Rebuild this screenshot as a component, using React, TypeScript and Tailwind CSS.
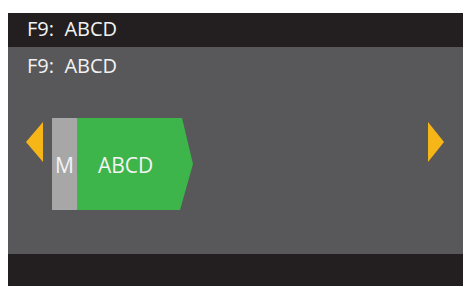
export default function App() {
  return (
    <div className="w-[465px] h-[287px] bg-white pt-[13px] pl-[8px] pr-[2px] pb-[1px] flex" style={{ fontFamily: '"Open Sans", "Noto Sans", sans-serif' }}>
      <div className="flex-1 flex flex-col">
        <div className="h-[34px] bg-[#231f20] flex items-center pl-[19px] pb-[2px]">
          <span className="text-[20px] leading-[24px] text-[#f2f2f2] whitespace-pre">F9:  ABCD</span>
        </div>
        <div className="flex-1 bg-[#58585a] flex flex-col pl-[18px] pr-[18px] pt-[7px]">
          <div className="text-[20px] leading-[24px] text-[#f2f2f2] whitespace-pre pl-[1px]">F9:  ABCD</div>
          <div className="flex items-start mt-[40px]">
            <svg width="18" height="41" viewBox="0 0 18 41" className="mt-[4px]">
              <polygon points="0,20 17,0 17,40" fill="#f7b618" />
            </svg>
            <div className="flex ml-[8px]">
              <div className="w-[25px] h-[92px] bg-[#a7a7a8] flex items-center justify-center">
                <span className="text-[21px] leading-none text-[#f4f4f4] mt-[2px]">M</span>
              </div>
              <div className="w-[116px] h-[92px] bg-[#3db54a] [clip-path:polygon(0_0,105px_0,116px_46px,103px_100%,0_100%)] flex items-center pl-[21px]">
                <span className="text-[21px] leading-none text-[#f4f4f4] mt-[2px]">ABCD</span>
              </div>
            </div>
            <div className="flex-1" />
            <svg width="17" height="41" viewBox="0 0 17 41" className="mt-[4px]">
              <polygon points="0,0 16,20 0,40" fill="#f7b618" />
            </svg>
          </div>
        </div>
        <div className="h-[32px] bg-[#231f20]" />
      </div>
    </div>
  );
}
